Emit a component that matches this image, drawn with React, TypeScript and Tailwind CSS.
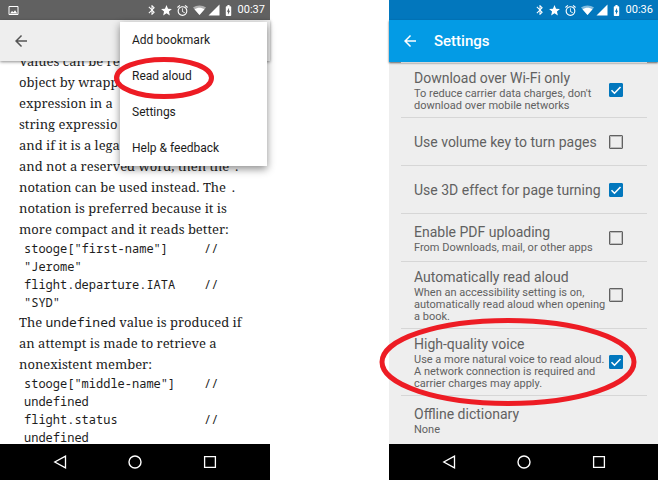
import type { ReactNode } from "react";
import { MdAlarm, MdArrowBack, MdBatteryChargingFull, MdBluetooth, MdStar } from "react-icons/md";

function StatusBar({ time, tone, children }: { time: string; tone: string; children?: ReactNode }) {
  return (
    <div className={`flex h-5 items-center pr-[5px] pl-2 text-white ${tone}`}>
      {children}
      <div className="ml-auto flex items-center">
        <MdBluetooth className="mr-[2px] size-3" />
        <MdStar className="mr-[3px] size-[13px]" />
        <MdAlarm className="mr-1 size-[13px]" />
        <svg className="mr-[2px] h-3 w-[13px]" viewBox="0 0 13 12" aria-hidden="true">
          <path d="M0 3.600C3.600 .8 9.400 .8 13 3.600L6.500 11z" fill="currentColor" opacity=".5" />
          <path d="M1.500 5.300C4.400 3.200 8.600 3.200 11.500 5.300L6.500 11z" fill="currentColor" />
        </svg>
        <svg className="mr-[2px] h-3 w-[12px]" viewBox="0 0 12 12" aria-hidden="true">
          <path d="M11.500 .5V11.500H.5z" fill="currentColor" />
        </svg>
        <MdBatteryChargingFull className="mr-[3px] size-[13px]" />
        <span className="text-[11px] leading-4">{time}</span>
      </div>
    </div>
  );
}

function NavBar() {
  const button = "flex flex-1 items-center justify-center";
  return (
    <nav className="flex h-9 bg-black px-[22px] text-white">
      <button type="button" aria-label="Back" className={button}>
        <svg className="size-4" viewBox="0 0 16 16" fill="none" stroke="currentColor" strokeWidth="1.3">
          <path d="M13.500 2.200V13.800L2.800 8z" />
        </svg>
      </button>
      <button type="button" aria-label="Home" className={button}>
        <svg className="size-4" viewBox="0 0 16 16" fill="none" stroke="currentColor" strokeWidth="1.4">
          <circle cx="8" cy="8" r="6" />
        </svg>
      </button>
      <button type="button" aria-label="Recent apps" className={button}>
        <svg className="size-4" viewBox="0 0 16 16" fill="none" stroke="currentColor" strokeWidth="1.3">
          <path d="M2.600 2.600H13.400V13.400H2.600z" />
        </svg>
      </button>
    </nav>
  );
}

const prose = "text-[13px] leading-[21px]";
const code = "pl-[5px] text-[12px] leading-[18px] whitespace-pre font-['Noto_Sans_Mono','DejaVu_Sans_Mono',monospace]";
const inlineCode = "text-[13px] leading-4 font-['Noto_Sans_Mono','DejaVu_Sans_Mono',monospace]";

function Reader() {
  return (
    <section className="relative flex min-w-0 flex-col bg-white">
      <StatusBar time="00:37" tone="bg-[#616161]">
        <svg className="h-[9px] w-[11px]" viewBox="0 0 11 9" aria-hidden="true">
          <path d="M1 .5H10V8.500H1z" fill="none" stroke="currentColor" />
          <path d="M2 7.500L4 5L5.500 6.300L7 4.300L9.300 7.500z" fill="currentColor" />
        </svg>
      </StatusBar>
      <header className="relative z-10 flex h-[41px] items-center bg-[#eeeeee] pl-3 text-[#555555] shadow-[0_1px_3px_rgba(0,0,0,0.45)]">
        <button type="button" aria-label="Back">
          <MdArrowBack className="size-[18px]" />
        </button>
      </header>
      <article className="flex-1 overflow-hidden pl-[19px] whitespace-nowrap text-[#1c1c1c] font-['Noto_Serif','Droid_Serif','Liberation_Serif',serif]">
        <div className="-mt-[10px] -mb-2">
          <p className={prose}>
            Values can be re<br />
            object by wrapp<br />
            expression in a<br />
            string expressio<br />
            and if it is a lega<br />
            and not a reserved word, then the <code className={inlineCode}>.</code><br />
            notation can be used instead. The <code className={inlineCode}>.</code><br />
            notation is preferred because it is<br />
            more compact and it reads better:
          </p>
          <pre className={code}>{`stooge["first-name"]     //
"Jerome"
flight.departure.IATA    //
"SYD"`}</pre>
          <p className={prose}>
            The <code className={inlineCode}>undefined</code> value is produced if<br />
            an attempt is made to retrieve a<br />
            nonexistent member:
          </p>
          <pre className={code}>{`stooge["middle-name"]    //
undefined
flight.status            //
undefined`}</pre>
        </div>
      </article>
      <NavBar />
      <OverflowMenu />
    </section>
  );
}

function OverflowMenu() {
  const item = "relative flex h-9 w-full items-center pl-3 text-left text-[12px] leading-4";
  return (
    <div role="menu" className="absolute top-[22px] right-[3px] z-20 w-[147px] bg-white text-[#1c1c1c] shadow-[0_3px_8px_rgba(0,0,0,0.45)]">
      <button type="button" role="menuitem" className={item}>Add bookmark</button>
      <button type="button" role="menuitem" className={item}>
        Read aloud
        <svg className="pointer-events-none absolute -top-[2px] -left-[7px] h-11 w-[102px]" viewBox="0 0 102 44" aria-hidden="true">
          <ellipse cx="51" cy="22" rx="47.500" ry="18.500" fill="none" stroke="#ed1c24" strokeWidth="5" />
        </svg>
      </button>
      <button type="button" role="menuitem" className={item}>Settings</button>
      <button type="button" role="menuitem" className={item}>Help &amp; feedback</button>
    </div>
  );
}

type Setting = { id: string; title: string; detail?: string; checked?: boolean; circled?: boolean };

const settings: Setting[] = [
  { id: "wifi", title: "Download over Wi-Fi only", detail: "To reduce carrier data charges, don't\ndownload over mobile networks", checked: true },
  { id: "volume", title: "Use volume key to turn pages", checked: false },
  { id: "effect", title: "Use 3D effect for page turning", checked: true },
  { id: "pdf", title: "Enable PDF uploading", detail: "From Downloads, mail, or other apps", checked: false },
  { id: "auto", title: "Automatically read aloud", detail: "When an accessibility setting is on,\nautomatically read aloud when opening\na book.", checked: false },
  { id: "voice", title: "High-quality voice", detail: "Use a more natural voice to read aloud.\nA network connection is required and\ncarrier charges may apply.", checked: true, circled: true },
  { id: "dictionary", title: "Offline dictionary", detail: "None" },
];

function SettingRow({ setting }: { setting: Setting }) {
  const { id, title, detail, checked, circled } = setting;
  const text = (
    <>
      <span className="block text-[14px] leading-5">{title}</span>
      {detail && <span className="block text-[11px] leading-3">{detail}</span>}
    </>
  );
  return (
    <li className="relative flex min-h-12 items-center border-b border-[#d6d6d6] py-[5px] pr-6 pl-[13px] last:border-transparent">
      {checked === undefined ? (
        <button type="button" className="flex-1 text-left whitespace-pre text-[#616161]">{text}</button>
      ) : (
        <>
          <label htmlFor={id} className="min-w-0 flex-1 whitespace-pre text-[#616161]">{text}</label>
          <span className="relative flex size-[14px]">
            <input
              id={id}
              type="checkbox"
              defaultChecked={checked}
              className="peer size-[14px] appearance-none rounded-[1px] border border-[#616161] inset-ring inset-ring-[#bbbbbb] checked:border-[#0277bd] checked:bg-[#0277bd] checked:inset-ring-0"
            />
            <svg className="pointer-events-none absolute inset-0 hidden size-[14px] peer-checked:block" viewBox="0 0 14 14" aria-hidden="true">
              <path d="M2.500 7.200L5.500 10.200L11.500 4" fill="none" stroke="white" strokeWidth="1.600" />
            </svg>
          </span>
        </>
      )}
      {circled && (
        <svg className="pointer-events-none absolute -top-[12px] -left-[23px] z-10 h-[90px] w-[260px]" viewBox="0 0 260 90" aria-hidden="true">
          <ellipse cx="130" cy="45" rx="126" ry="41.500" fill="none" stroke="#ed1c24" strokeWidth="5" />
        </svg>
      )}
    </li>
  );
}

function Settings() {
  return (
    <section className="flex min-w-0 flex-col bg-[#eeeeee]">
      <StatusBar time="00:36" tone="bg-[#0277bd]" />
      <header className="flex h-[42px] items-center bg-[#039be5] pl-3 text-white shadow-[0_1px_2px_rgba(0,0,0,0.6)]">
        <button type="button" aria-label="Back">
          <MdArrowBack className="size-[18px]" />
        </button>
        <h1 className="ml-[15px] text-[15px] leading-5 font-medium">Settings</h1>
      </header>
      <ul className="mr-[11px] ml-3 flex-1 border-t border-[#d6d6d6]">
        {settings.map((setting) => (
          <SettingRow key={setting.id} setting={setting} />
        ))}
      </ul>
      <NavBar />
    </section>
  );
}

export default function App() {
  return (
    <main className="grid min-h-screen grid-cols-[minmax(0,270fr)_minmax(0,269fr)] gap-x-[119px] bg-white font-[Roboto,'Liberation_Sans',sans-serif]">
      <Reader />
      <Settings />
    </main>
  );
}
